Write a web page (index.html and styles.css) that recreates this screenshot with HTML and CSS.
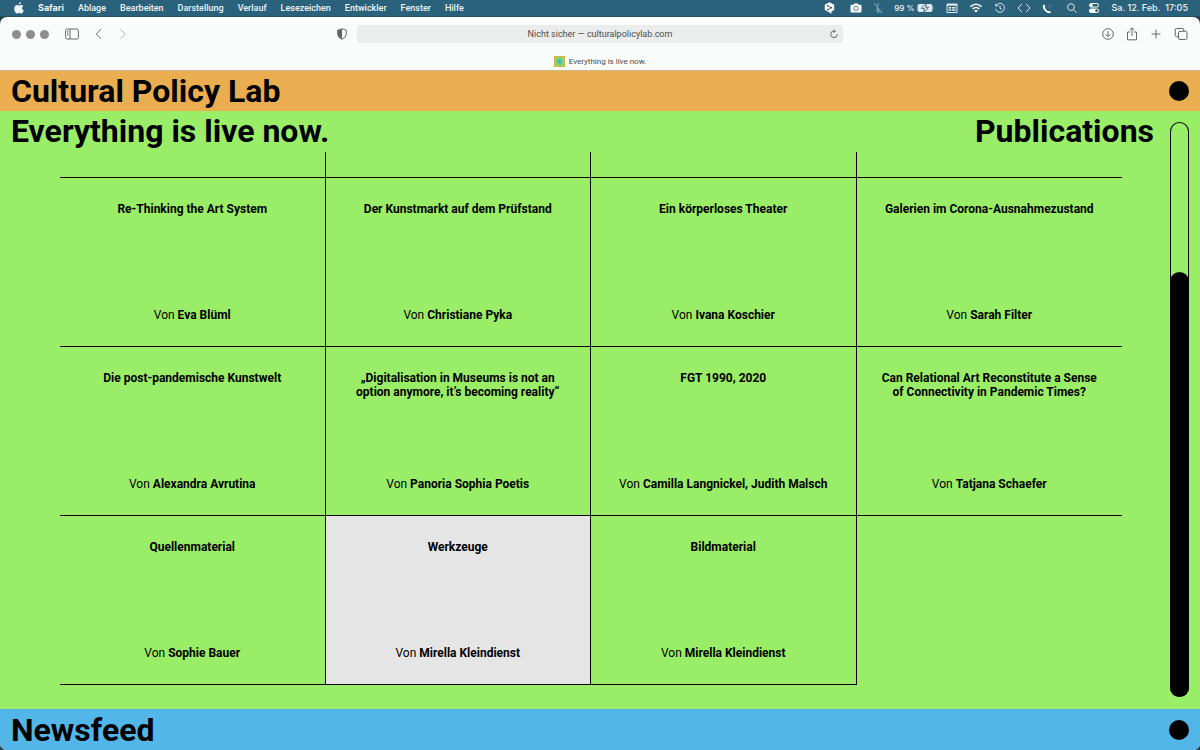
FILE: index.html
```html
<!DOCTYPE html>
<html lang="de">
<head>
<meta charset="utf-8">
<meta name="viewport" content="width=device-width, initial-scale=1">
<title>Everything is live now.</title>
<link rel="stylesheet" href="styles.css">
</head>
<body>
<header class="menubar">
  <nav class="menus" aria-label="Menü">
    <svg class="apple" width="10" height="12" viewBox="0 0 20 24" fill="currentColor"><path d="M14 0c.2 2.700-2 5-4.300 5C9.400 2.500 11.500.300 14 0zM18.600 8.200c-3.700 2.300-2.900 7.400.9 8.900C18.500 20 16.500 23 14.500 23c-1.700 0-2.300-1-4.200-1s-2.600 1-4.200 1C3.500 23 .5 18 .5 13.500.5 8.800 3.300 6.200 6.100 6.200c1.800 0 3.100 1.100 4.200 1.100 1.200 0 2.700-1.200 4.700-1.200 1.300 0 2.800.7 3.600 2.100z"/></svg>
    <button class="menu app">Safari</button>
    <button class="menu">Ablage</button>
    <button class="menu">Bearbeiten</button>
    <button class="menu">Darstellung</button>
    <button class="menu">Verlauf</button>
    <button class="menu">Lesezeichen</button>
    <button class="menu">Entwickler</button>
    <button class="menu">Fenster</button>
    <button class="menu">Hilfe</button>
  </nav>
  <div class="status">
    <svg class="lead" width="11" height="12" viewBox="0 0 11 12"><path d="M5.500.3l4.700 2.500v5.300L7.500 9.600v2.100L5.400 10.600.8 8.100V2.800z" fill="#fff"/><path d="M3.700 3.800l3.600 1.900-3.600 2" fill="none" stroke="#2e3f4b" stroke-width=".8"/><circle cx="3.700" cy="3.800" r=".8" fill="#2e3f4b"/><circle cx="7.400" cy="5.700" r=".8" fill="#2e3f4b"/><circle cx="3.700" cy="7.700" r=".8" fill="#2e3f4b"/></svg>
    <svg width="12" height="12" viewBox="0 0 12 12"><path d="M1.500 2.800h2L4.300 1.500h3.400l.8 1.300h2q1 0 1 1v5.700q0 1-1 1h-9q-1 0-1-1V3.800q0-1 1-1z" fill="#fff"/><circle cx="6" cy="6.400" r="2.200" fill="none" stroke="#2b627b" stroke-width=".8"/></svg>
    <svg class="dim line" width="10" height="12" viewBox="0 0 10 12"><path d="M1 1l8 10M2.500 8.500L5 6.300M5 1.200v3.300M5 6.500v4.300l1.800-1.500"/></svg>
    <span class="power">99 %
      <svg width="18" height="10" viewBox="0 0 18 10"><rect x=".5" y="1" width="15" height="8" rx="2" fill="#dce8ed"/><path d="M16.500 3.800q1.200 1.200 0 2.400z" fill="#9fbac6"/><path d="M9.500 0L4.500 5.400h3L6.500 10l5-5.700h-3z" fill="#fff" stroke="#2b627b" stroke-width=".9"/></svg>
    </span>
    <svg width="12" height="12" viewBox="0 0 12 12"><path d="M1 2h10v8.500H1z" fill="none" stroke="#dce8ed"/><path d="M1 2h10v1.800H1zM2.500 5h2.800v1.500H2.500zM6 5h3.500v1.500H6zM2.500 7.300h2.800v1.500H2.500zM6 7.300h3.500v1.500H6z" fill="#dce8ed"/></svg>
    <svg width="14" height="12" viewBox="0 0 14 12"><g fill="none" stroke="#fff" stroke-width="1.500"><path d="M1.500 4.600q5.500-4.800 11 0M3.600 6.900q3.400-2.900 6.800 0"/></g><path d="M5.100 8.500q1.900-1.500 3.800 0L7 10.500z" fill="#fff"/></svg>
    <svg class="line" width="12" height="12" viewBox="0 0 12 12"><path d="M2.100 3.500a4.500 4.500 0 1 1-.5 3.300M1.400 1.800l.5 2.300 2.200-.5M6 3.400v3l2 1"/></svg>
    <svg class="line" width="14" height="12" viewBox="0 0 14 12"><path d="M4.800 2L1 6l3.800 4M9.200 2L13 6l-3.800 4"/></svg>
    <svg width="12" height="12" viewBox="0 0 12 12"><path d="M1.300 3q1-.8 1.500 0l.5 1.500-.5 1Q3.800 8 6.200 9.300l1-.4 1.400.9q.7.700-.4 1.200-2 .6-4.700-1.600T.9 4.700q-.2-1.100.4-1.700z" fill="#fff"/><path d="M7 4.800L9.800 2M7.200 2.500v2.300h2.300" fill="none" stroke="#578096" stroke-width=".7"/></svg>
    <svg class="line" width="12" height="12" viewBox="0 0 12 12"><circle cx="6" cy="5.100" r="3.400"/><path d="M8.500 7.700l2.900 2.900"/></svg>
    <svg width="12" height="12" viewBox="0 0 12 12"><rect x="1.500" y="1.500" width="9" height="3.600" rx="1.800" fill="none" stroke="#fff"/><circle cx="3.300" cy="3.300" r="1.500" fill="#fff"/><rect x="1" y="6.400" width="10" height="4.600" rx="2.300" fill="#fff"/><circle cx="8.600" cy="8.700" r="1.400" fill="#2b627b"/></svg>
    <time class="clock"><span>Sa. 12. Feb.</span><span>17:05</span></time>
  </div>
</header>

<div class="window">
  <div class="toolbar">
    <div class="side">
      <div class="lights"><i></i><i></i><i></i></div>
      <button class="tool" aria-label="Seitenleiste"><svg width="14" height="12" viewBox="0 0 14 12"><rect x=".6" y="1" width="12.800" height="10" rx="1.500"/><path d="M5 1v10M2 3.200h1.500M2 5h1.500M2 6.800h1.500"/></svg></button>
      <button class="tool" aria-label="Zurück"><svg width="14" height="12" viewBox="0 0 14 12"><path d="M10 1.200L5.300 6 10 10.800"/></svg></button>
      <button class="tool faint" aria-label="Vorwärts"><svg width="14" height="12" viewBox="0 0 14 12"><path d="M3.500 1.200L8.200 6 3.500 10.800"/></svg></button>
      <button class="tool shield" aria-label="Datenschutz"><svg width="10" height="12" viewBox="0 0 10 12"><path d="M5 .8l4.300 1.500v4q0 3-4.300 5-4.300-2-4.300-5v-4z"/><path d="M5 .8v10.500q-4.300-2-4.300-5v-4z" fill="#666" stroke="none"/></svg></button>
    </div>
    <div class="address">
      <input class="url" type="text" aria-label="Adresse" value="Nicht sicher — culturalpolicylab.com">
      <button class="tool reload" aria-label="Neu laden"><svg width="10" height="10" viewBox="0 0 10 10"><path d="M8.300 5.300A3.300 3.300 0 1 1 5 2h1.200M4.600.3L6.400 2 4.600 3.800"/></svg></button>
    </div>
    <div class="side end">
      <button class="tool" aria-label="Downloads"><svg width="12" height="12" viewBox="0 0 12 12"><circle cx="6" cy="6" r="5.300"/><path d="M6 3v5.500M3.800 6.400L6 8.600l2.200-2.200"/></svg></button>
      <button class="tool" aria-label="Teilen"><svg width="12" height="14" viewBox="0 0 12 14"><path d="M4 5H1.500v7.800h9V5H8M6 9V1M3.700 3L6 .8 8.300 3"/></svg></button>
      <button class="tool" aria-label="Neuer Tab"><svg width="12" height="12" viewBox="0 0 12 12"><path d="M6 1.500v9M1.500 6h9"/></svg></button>
      <button class="tool" aria-label="Tabübersicht"><svg width="14" height="12" viewBox="0 0 14 12"><rect x="4.500" y="3.300" width="8.500" height="8.200" rx="1.500"/><path d="M4.500 8.700H2.700q-1.500 0-1.500-1.500V2q0-1.500 1.500-1.500h5.600q1.500 0 1.500 1.500v1.300"/></svg></button>
    </div>
  </div>
  <div class="tab"><i class="favicon"></i>Everything is live now.</div>

  <header class="band lab"><h1>Cultural Policy Lab</h1><button class="dot" aria-label="Cultural Policy Lab öffnen"></button></header>
  <main class="live">
    <div class="content">
      <div class="heads"><h2>Everything is live now.</h2><h2>Publications</h2></div>
      <div class="grid">
        <div class="stub"></div><div class="stub"></div><div class="stub"></div><div class="stub"></div>
        <a class="cell" href="#"><b>Re-Thinking the Art System</b><span>Von <b>Eva Blüml</b></span></a>
        <a class="cell" href="#"><b>Der Kunstmarkt auf dem Prüfstand</b><span>Von <b>Christiane Pyka</b></span></a>
        <a class="cell" href="#"><b>Ein körperloses Theater</b><span>Von <b>Ivana Koschier</b></span></a>
        <a class="cell" href="#"><b>Galerien im Corona-Ausnahmezustand</b><span>Von <b>Sarah Filter</b></span></a>
        <a class="cell" href="#"><b>Die post-pandemische Kunstwelt</b><span>Von <b>Alexandra Avrutina</b></span></a>
        <a class="cell" href="#"><b>„Digitalisation in Museums is not an<br>option anymore, it’s becoming reality“</b><span>Von <b>Panoria Sophia Poetis</b></span></a>
        <a class="cell" href="#"><b>FGT 1990, 2020</b><span>Von <b>Camilla Langnickel, Judith Malsch</b></span></a>
        <a class="cell" href="#"><b>Can Relational Art Reconstitute a Sense<br>of Connectivity in Pandemic Times?</b><span>Von <b>Tatjana Schaefer</b></span></a>
        <a class="cell" href="#"><b>Quellenmaterial</b><span>Von <b>Sophie Bauer</b></span></a>
        <a class="cell active" href="#"><b>Werkzeuge</b><span>Von <b>Mirella Kleindienst</b></span></a>
        <a class="cell" href="#"><b>Bildmaterial</b><span>Von <b>Mirella Kleindienst</b></span></a>
      </div>
    </div>
    <div class="track"><div class="thumb"></div></div>
  </main>
  <footer class="band news"><h2>Newsfeed</h2><button class="dot" aria-label="Newsfeed öffnen"></button></footer>
</div>
</body>
</html>
```
FILE: styles.css
```css
* { box-sizing: border-box; }

body {
  margin: 0;
  min-height: 100vh;
  display: flex;
  flex-direction: column;
  background: #27404a;
  color: #000;
  font-family: Roboto, "Liberation Sans", sans-serif;
}

button {
  padding: 0;
  border: 0;
  background: none;
  color: inherit;
  font: inherit;
}

svg { display: block; flex: none; }

.menubar {
  display: flex;
  justify-content: space-between;
  height: 17px;
  padding: 0 12px 0 14px;
  border-bottom: 1px solid #27505f;
  background: #2b627b;
  color: #eef4f7;
  font: 500 9px/16px Inter, sans-serif;
}

.menus, .status, .power, .clock { display: flex; align-items: center; }
.menus { gap: 14px; font-family: Roboto, sans-serif; }
.app { font-family: Inter, sans-serif; font-weight: 700; }
.status { gap: 11px; }
.lead { margin-right: 4px; }
.power { gap: 3px; font-size: 8px; }
.clock { gap: 5px; }
.line { fill: none; stroke: #dce8ed; stroke-width: 1; }
.dim { opacity: .6; }

.window {
  flex: 1;
  display: flex;
  flex-direction: column;
  border-radius: 7px;
  overflow: hidden;
  background: #fafcfb;
}

.toolbar {
  display: grid;
  grid-template-columns: 1fr 486px 1fr;
  align-items: center;
  height: 34px;
  padding: 0 12px;
}

.side { display: flex; align-items: center; gap: 12px; }
.end { justify-content: flex-end; }
.lights { display: flex; gap: 5px; margin-right: 4px; }
.lights i { width: 9px; height: 9px; border-radius: 50%; background: #8e8e8e; }
.tool svg { fill: none; stroke: #686868; stroke-width: 1; }
.faint { opacity: .5; }
.shield { margin-left: auto; margin-right: 10px; }

.address {
  display: flex;
  align-items: center;
  height: 18px;
  padding: 0 4px 0 14px;
  border-radius: 4px;
  background: #ebecec;
}

.url {
  flex: 1;
  min-width: 0;
  padding: 0;
  border: 0;
  background: none;
  color: #4c4c4c;
  font: 9px/18px Roboto, sans-serif;
  text-align: center;
}

.tab {
  display: flex;
  justify-content: center;
  align-items: center;
  gap: 4px;
  height: 20px;
  padding-top: 2px;
  border-bottom: 1px solid #c9b78d;
  color: #4c4c4c;
  font: 8px/17px Roboto, sans-serif;
}

.favicon {
  width: 11px;
  height: 11px;
  border: 1px solid #dcae4c;
  background: radial-gradient(circle, #35bfc2 1px, #8fd969 4px, #b5cb59 6px);
}

.band {
  display: flex;
  justify-content: space-between;
  align-items: center;
  height: 40px;
  padding: 0 11px;
}

.lab { background: #eaad50; }
.news { height: 41px; background: #53b6e8; }

h1, h2 { margin: 0; font-size: 32px; line-height: 40px; font-weight: 700; }

.dot { width: 20px; height: 20px; border-radius: 50%; background: #000; }

.live {
  flex: 1;
  display: flex;
  gap: 16px;
  padding: 0 11px 12px 11px;
  background: #9aed67;
}

.content { flex: 1; }
.heads { display: flex; justify-content: space-between; }

.grid {
  display: grid;
  grid-template-columns: repeat(4, 1fr);
  margin: 1px 32px 0 49px;
}

.stub { height: 26px; }
.stub, .cell { border-right: 1px solid #000; border-bottom: 1px solid #000; }
.stub:nth-child(4n), .cell:nth-child(4n) { border-right: 0; }

.cell {
  display: flex;
  flex-direction: column;
  justify-content: space-between;
  height: 169px;
  padding: 24px 8px;
  color: inherit;
  font-size: 12px;
  line-height: 14px;
  text-align: center;
  text-decoration: none;
}

.active { background: #e5e5e5; }

.track {
  display: flex;
  align-items: flex-end;
  width: 19px;
  margin-top: 11px;
  border-radius: 10px;
  box-shadow: inset 0 0 0 1px #000;
}

.thumb { width: 100%; height: 74%; border-radius: 10px; background: #000; }
```
